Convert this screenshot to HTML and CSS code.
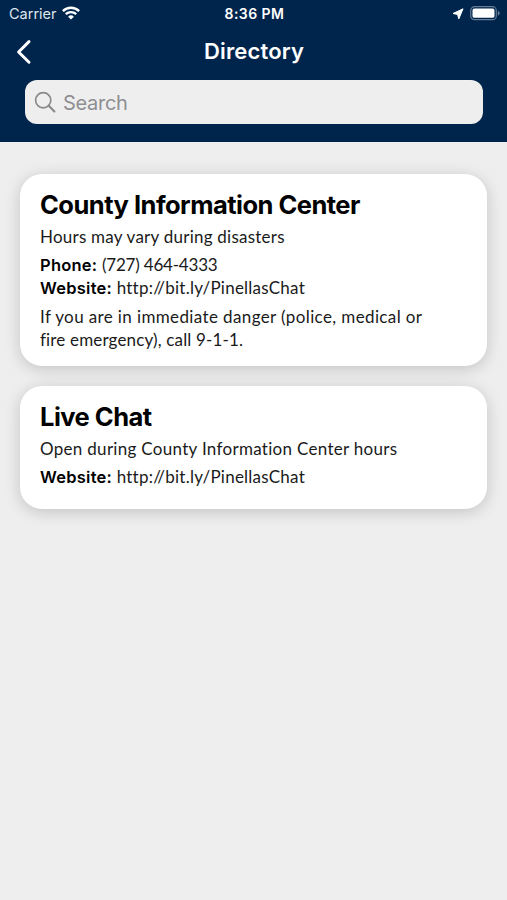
FILE: index.html
```html
<!DOCTYPE html>
<html lang="en">
<head>
    <meta charset="UTF-8">
    <meta name="viewport" content="width=device-width, initial-scale=1.0">
    <title>Directory</title>
    <link rel="stylesheet" href="styles.css">
</head>
<body>
    <header class="header">
        <div class="status-bar">
            <div class="status-left">
                <span class="carrier">Carrier</span>
                <svg class="wifi-icon" width="18" height="14" viewBox="0 0 18 14" fill="none" stroke="#fff" stroke-width="2.4">
                    <path d="M0.9 5.1 A11.6 11.6 0 0 1 17.1 5.1"/>
                    <path d="M3.8 8.2 A7.5 7.5 0 0 1 14.2 8.2"/>
                    <path d="M9 13.6 L6.1 10.7 A4.2 4.2 0 0 1 11.9 10.7 Z" fill="#fff" stroke="none"/>
                </svg>
            </div>
            <span class="time">8:36 PM</span>
            <div class="status-right">
                <svg class="location-icon" width="12" height="12" viewBox="0 0 12 12">
                    <path d="M11 0.8 L6.8 10.9 L5.6 6.4 L1 5.5 Z" fill="#fff" stroke="#fff" stroke-width="1" stroke-linejoin="round"/>
                </svg>
                <svg class="battery-icon" width="30" height="15" viewBox="0 0 30 15">
                    <rect x="0.7" y="0.7" width="25.6" height="13" rx="3.8" fill="none" stroke="#667b94" stroke-width="1.2"/>
                    <rect x="2.5" y="2.6" width="22" height="9.2" rx="1.9" fill="#fff"/>
                    <path d="M27.8 4.8 C30.4 5.8 30.4 8.6 27.8 9.6 Z" fill="#667b94"/>
                </svg>
            </div>
        </div>

        <div class="nav-bar">
            <button class="back-btn" aria-label="Back">
                <svg width="17" height="26" viewBox="0 0 17 26" fill="none" stroke="#fff" stroke-width="3" stroke-linecap="round" stroke-linejoin="round">
                    <path d="M14 2.6 L3.6 13 L14 23.2"/>
                </svg>
            </button>
            <h1 class="nav-title">Directory</h1>
        </div>

        <div class="search-box">
            <svg class="search-icon" width="22" height="22" viewBox="0 0 22 22" fill="none" stroke="#8a8a8d" stroke-width="1.7" stroke-linecap="round">
                <circle cx="9.2" cy="9.2" r="7.6"/>
                <path d="M14.8 14.7 L20.4 20.4" stroke-width="2.1"/>
            </svg>
            <span class="search-text">Search</span>
        </div>
    </header>

    <main class="directory">
        <section class="card">
            <h2 class="card-title">County Information Center</h2>
            <p class="line">Hours may vary during disasters</p>
            <div class="contact">
                <p class="line"><b>Phone:</b> <span class="phone">(727) 464-4333</span></p>
                <p class="line"><b>Website:</b> <span class="url">http://bit.ly/PinellasChat</span></p>
            </div>
            <p class="line note">If you are in immediate danger (police, medical or<br><span class="note-end">fire emergency), call 9-1-1.</span></p>
        </section>

        <section class="card">
            <h2 class="card-title">Live Chat</h2>
            <p class="line open-hours">Open during County Information Center hours</p>
            <div class="contact">
                <p class="line"><b>Website:</b> <span class="url">http://bit.ly/PinellasChat</span></p>
            </div>
        </section>
    </main>
</body>
</html>
```

FILE: styles.css
```css
* {
    margin: 0;
    padding: 0;
    box-sizing: border-box;
}

body {
    font-family: Inter, 'Liberation Sans', sans-serif;
    background: #eeeeee;
    color: #000;
    min-height: 100vh;
}

.header {
    height: 142.4px;
    background: #00254d;
    color: #fff;
}

.status-bar {
    display: grid;
    grid-template-columns: 1fr auto 1fr;
    align-items: center;
    height: 27px;
    padding: 0 7px 0 9px;
}

.status-left,
.status-right {
    display: flex;
    align-items: center;
}

.status-left {
    gap: 5px;
}

.status-right {
    justify-content: flex-end;
    gap: 6px;
}

.wifi-icon {
    margin-top: -2px;
}

.carrier {
    font-size: 14.5px;
    color: #dfe5ec;
}

.time {
    font-size: 14px;
    font-weight: 600;
    letter-spacing: 0.45px;
}

.nav-bar {
    display: grid;
    grid-template-columns: 1fr auto 1fr;
    align-items: center;
    height: 49px;
    padding: 0 14px 0 15px;
}

.back-btn {
    display: flex;
    background: none;
    border: none;
}

.nav-title {
    font-size: 22px;
    font-weight: 600;
    letter-spacing: 0.15px;
    padding-bottom: 1px;
}

.search-box {
    display: flex;
    align-items: center;
    gap: 7px;
    height: 44px;
    margin: 4.3px 24.5px 0 25px;
    padding: 0 9px;
    border-radius: 12px;
    background: #eeeeee;
}

.search-text {
    font-size: 20px;
    letter-spacing: -0.3px;
    padding-top: 2px;
    color: #8e8e92;
}

.directory {
    display: flex;
    flex-direction: column;
    gap: 20px;
    padding: 31.6px 20px 0;
}

.card {
    min-height: 122.4px;
    padding: 14.6px 20px 14.8px;
    border-radius: 22px;
    background: #fff;
    box-shadow: 0 3px 16px rgba(0, 0, 0, 0.18);
}

.card-title {
    font-size: 25.5px;
    line-height: 32px;
    font-weight: 700;
    letter-spacing: -0.52px;
    margin-bottom: 4px;
}

.line {
    font-family: Lato, 'Liberation Sans', sans-serif;
    font-size: 17px;
    line-height: 23.5px;
    letter-spacing: 0.24px;
    color: #1a1a1a;
    white-space: nowrap;
}

.line b {
    font-family: Inter, 'Liberation Sans', sans-serif;
    font-size: 16.5px;
    line-height: 1;
    font-weight: 600;
    color: #000;
}

.phone {
    letter-spacing: -0.2px;
}

.note {
    letter-spacing: 0.38px;
}

.note-end {
    letter-spacing: 0.16px;
}

.open-hours {
    letter-spacing: 0.3px;
}

.contact {
    margin: 4.5px 0 5px;
}
```
